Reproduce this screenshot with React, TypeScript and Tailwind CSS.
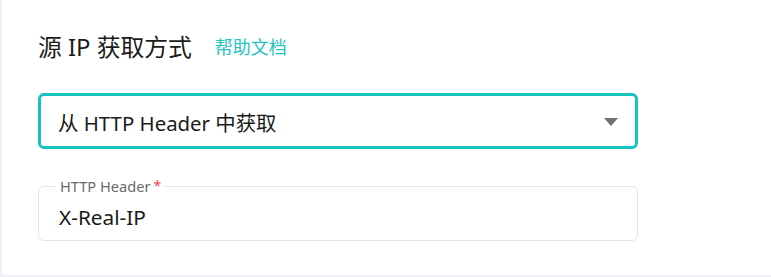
import React from "react";

export default function App() {
  return (
    <div className="w-[771px] h-[277px] bg-[#eff0f5] pl-[2px] overflow-hidden" style={{ fontFamily: '"Noto Sans", "Noto Sans CJK SC", sans-serif' }}>
      <div className="h-[275px] bg-white rounded-bl-[4px] pl-[36px] pt-[31px] flex flex-col">
        <div className="flex items-center h-[32px]">
          <span className="text-[23.8px] leading-[32px] text-[#1b1b1b]">源 IP 获取方式</span>
          <span className="ml-[23px] text-[18px] leading-[32px] text-[#25c3c1] cursor-pointer">帮助文档</span>
        </div>
        <div className="mt-[30px] w-[600px] h-[56px] border-[3px] border-[#13c4c0] rounded-[6px] flex items-center justify-between pl-[17px] pr-[17px]">
          <span className="text-[20.4px] leading-[28px] text-[#1a1a1a] translate-y-[2px]">从 HTTP Header 中获取</span>
          <svg width="14" height="8" viewBox="0 0 14 8" className="translate-y-[1px]">
            <path d="M0 0 H14 L7 8 Z" fill="#717171" />
          </svg>
        </div>
        <div className="relative mt-[37px] w-[600px] h-[55px] border border-[#e3e5ec] rounded-[6px] flex items-center pl-[20px]">
          <div className="absolute left-[17px] top-[-12px] bg-white px-[4px] flex items-start leading-[22px]">
            <span className="text-[14.6px] text-[#6a6a6a]">HTTP Header</span>
            <span className="ml-[3px] text-[14px] text-[#f5484a]">*</span>
          </div>
          <span className="text-[20.8px] leading-[28px] text-[#1a1a1a] translate-y-[3px]">X-Real-IP</span>
        </div>
      </div>
    </div>
  );
}
